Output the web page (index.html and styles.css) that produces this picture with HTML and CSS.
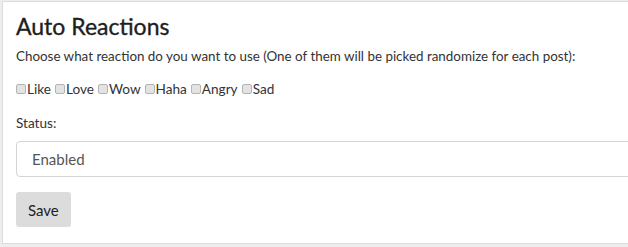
FILE: index.html
```html
<!DOCTYPE html>
<html lang="en">
<head>
  <meta charset="UTF-8" />
  <title>Auto Reactions</title>
  <link rel="stylesheet" href="styles.css">
</head>
<body>
  <div class="panel">
    <h1>Auto Reactions</h1>
    <p class="hint">Choose what reaction do you want to use (One of them will be picked randomize for each post):</p>
    <div class="reactions">
      <label><input type="checkbox" name="like"><span>Like</span></label>
      <label><input type="checkbox" name="love"><span>Love</span></label>
      <label><input type="checkbox" name="wow"><span>Wow</span></label>
      <label><input type="checkbox" name="haha"><span>Haha</span></label>
      <label><input type="checkbox" name="angry"><span>Angry</span></label>
      <label><input type="checkbox" name="sad"><span>Sad</span></label>
    </div>
    <div class="field">
      <label for="status">Status:</label>
      <select id="status">
        <option>Enabled</option>
        <option>Disabled</option>
      </select>
    </div>
    <button class="save">Save</button>
  </div>
</body>
</html>
```

FILE: styles.css
```css
body {
  margin: 0;
  padding: 1px 0 0 2px;
  background: #eeeeef;
  font-family: Lato, "Open Sans", sans-serif;
  color: #333;
  overflow: hidden;
}

.panel {
  background: #fff;
  border: 1px solid #dcdcdc;
  border-right: none;
  padding: 8px 0 15px 13px;
  width: 700px;
  height: 218px;
}

h1 {
  margin: 0 0 4px;
  font-size: 23px;
  font-weight: 400;
  line-height: 32px;
  color: #1e1e1e;
  -webkit-text-stroke: 0.35px #1e1e1e;
}

.hint {
  margin: 0 0 13px;
  font-size: 13.4px;
  line-height: 20px;
  color: #333;
}

.reactions {
  display: flex;
  align-items: center;
  margin-bottom: 14px;
  font-size: 13.6px;
  line-height: 20px;
}

.reactions label {
  display: flex;
  align-items: center;
  margin-right: 4px;
}

.reactions input {
  -webkit-appearance: none;
  appearance: none;
  width: 10px;
  height: 10px;
  margin: 0 1px 0 0;
  border: 1px solid #b4b4b4;
  border-radius: 2px;
  background: #e3e3e3;
}

.field label {
  display: block;
  font-size: 13.6px;
  line-height: 20px;
  margin-bottom: 8px;
}

select {
  -webkit-appearance: none;
  appearance: none;
  display: block;
  width: 640px;
  height: 36px;
  padding: 0 15px;
  border: 1px solid #d4d4d4;
  border-radius: 4px;
  background: #fff;
  font-family: inherit;
  font-size: 15px;
  color: #555;
}

.save {
  margin-top: 15px;
  height: 35px;
  padding: 0 12px;
  border: none;
  border-radius: 3px;
  background: #dcdcdc;
  font-family: inherit;
  font-size: 15px;
  color: #222;
}
```
